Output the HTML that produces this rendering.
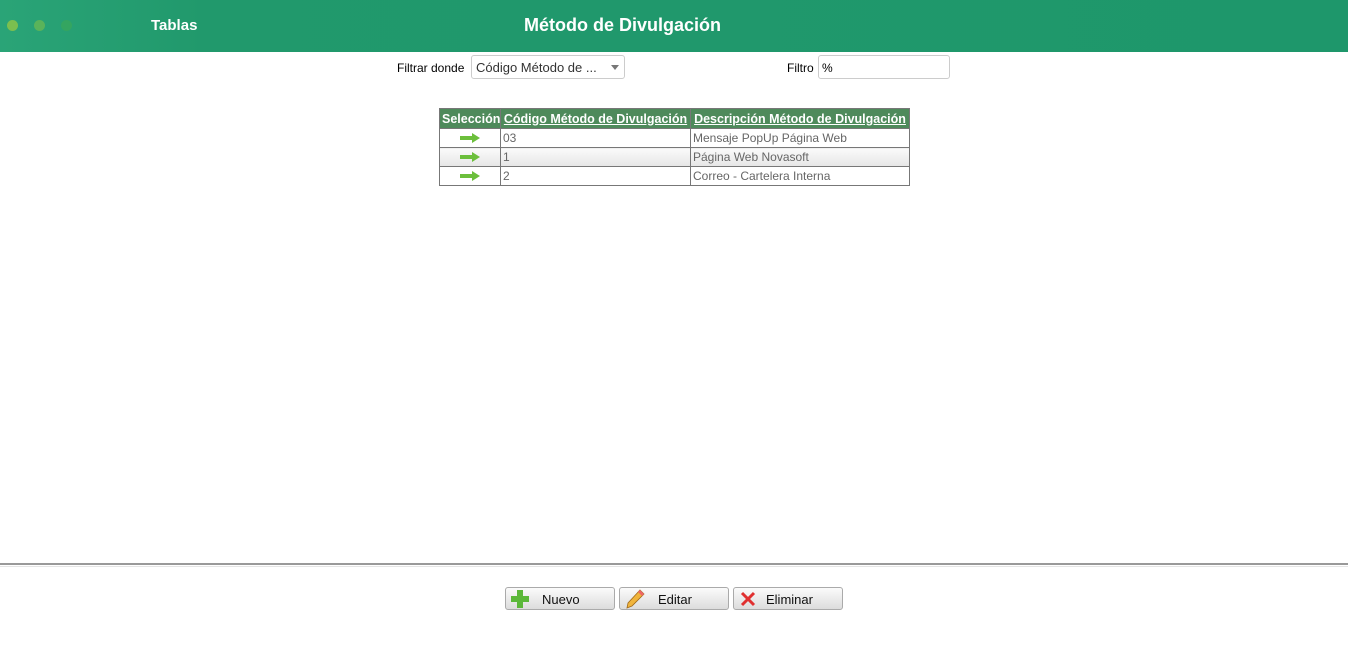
<!DOCTYPE html>
<html><head><meta charset="utf-8"><style>
body{margin:0;width:1348px;height:653px;background:#fff;font-family:"Liberation Sans","DejaVu Sans",sans-serif;position:relative;overflow:hidden}
.hdr{position:absolute;left:0;top:0;width:1348px;height:52px;background:linear-gradient(90deg,#2aa477 0%,#21996c 15%,#1e976b 100%)}
.dot{position:absolute;top:20px;width:11px;height:11px;border-radius:50%}
.t{position:absolute;color:#fff;font-weight:bold}
.lbl{position:absolute;font-size:12px;color:#000}
.box{position:absolute;border:1px solid #ccc;border-radius:3px;background:#fff;font-size:13px;color:#333}
table{position:absolute;left:439px;top:108px;border-collapse:collapse;font-size:12px;table-layout:fixed;width:470px}
th{background:#4e8a5b;color:#fff;font-weight:bold;text-decoration:underline;padding:0 2px;height:19px;border:1px solid #777;white-space:nowrap;overflow:hidden;font-size:12.5px}
th:first-child{text-decoration:none}
td{border:1px solid #777;height:18px;padding:0 2px;color:#666;white-space:nowrap}
tr.g td{background:linear-gradient(#fafafa,#e6e6e6)}
.arr{display:block;margin:0 auto;width:20px;height:10px}
.btn{position:absolute;top:587px;width:108px;height:21px;border:1px solid #aaa;border-radius:3px;background:linear-gradient(#fbfbfb,#dcdcdc);font-size:13px;color:#111}
.btn span{position:absolute;top:4px}
</style></head><body>
<div class="hdr">
<div class="dot" style="left:7px;background:#7bbf4f"></div>
<div class="dot" style="left:34px;background:#5ab35a"></div>
<div class="dot" style="left:61px;background:#34a560"></div>
<div class="t" style="left:151px;top:17px;font-size:15px">Tablas</div>
<div class="t" style="left:524px;top:15px;font-size:18px">Método de Divulgación</div>
</div>
<div class="lbl" style="left:397px;top:61px">Filtrar donde</div>
<div class="box" style="left:471px;top:55px;width:152px;height:22px"><span style="position:absolute;left:4px;top:4px">Código Método de ...</span><span style="position:absolute;right:5px;top:9px;border:4px solid transparent;border-top:5px solid #777;border-bottom:0"></span></div>
<div class="lbl" style="left:787px;top:61px">Filtro</div>
<div class="box" style="left:818px;top:55px;width:130px;height:22px"><span style="position:absolute;left:3px;top:5px;font-size:12px;color:#000">%</span></div>
<table>
<colgroup><col style="width:61px"><col style="width:190px"><col style="width:219px"></colgroup>
<tr><th>Selección</th><th>Código Método de Divulgación</th><th>Descripción Método de Divulgación</th></tr>
<tr><td><svg class="arr" viewBox="0 0 20 10"><path d="M0 3h12V0l8 5-8 5V7H0z" fill="#6cbf3c"/></svg></td><td>03</td><td>Mensaje PopUp Página Web</td></tr>
<tr class="g"><td><svg class="arr" viewBox="0 0 20 10"><path d="M0 3h12V0l8 5-8 5V7H0z" fill="#6cbf3c"/></svg></td><td>1</td><td>Página Web Novasoft</td></tr>
<tr><td><svg class="arr" viewBox="0 0 20 10"><path d="M0 3h12V0l8 5-8 5V7H0z" fill="#6cbf3c"/></svg></td><td>2</td><td>Correo - Cartelera Interna</td></tr>
</table>
<div style="position:absolute;left:0;top:563px;width:1348px;height:2px;background:#999"></div>
<div style="position:absolute;left:0;top:566px;width:1348px;height:1px;background:#e4e4e4"></div>
<div class="btn" style="left:505px"><svg style="position:absolute;left:5px;top:2px" width="18" height="18" viewBox="0 0 18 18"><path d="M6 0h6v6h6v6h-6v6H6v-6H0V6h6z" fill="#5cb83a"/></svg><span style="left:36px">Nuevo</span></div>
<div class="btn" style="left:619px"><svg style="position:absolute;left:5px;top:1px" width="20" height="20" viewBox="0 0 20 20"><path d="M15 1l4 4L7 17l-5 2 1-5z" fill="#f0b43c" stroke="#a06a1a" stroke-width=".8"/><path d="M15 1l4 4-2 2-4-4z" fill="#e66"/></svg><span style="left:38px">Editar</span></div>
<div class="btn" style="left:733px"><svg style="position:absolute;left:6px;top:3px" width="16" height="16" viewBox="0 0 16 16"><path d="M2 2l12 12M14 2L2 14" stroke="#e03030" stroke-width="3"/></svg><span style="left:32px">Eliminar</span></div>
</body></html>
